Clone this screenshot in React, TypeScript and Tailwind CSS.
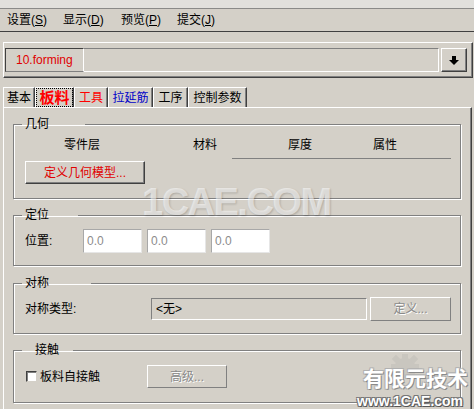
import React from 'react';

const font = "font-['Liberation_Sans','Noto_Sans_CJK_SC',sans-serif]";

const raised =
  'border border-t-white border-l-white border-r-[#404040] border-b-[#404040] shadow-[inset_-1px_-1px_0_#808080]';

type GroupProps = {
  title: string;
  legendClass: string;
  className?: string;
  children: React.ReactNode;
};

const Group: React.FC<GroupProps> = ({ title, legendClass, className = '', children }) => (
  <fieldset
    className={`ml-[9px] w-[448px] border border-[#808080] shadow-[inset_1px_1px_0_#fff,1px_1px_0_#fff] ${className}`}
  >
    <legend className={`ml-[8px] h-[14px] text-[12px] leading-[14px] text-black ${legendClass}`}>{title}</legend>
    {children}
  </fieldset>
);

const DisabledButton: React.FC<{ label: string; className: string }> = ({ label, className }) => (
  <div
    className={`flex items-center justify-center border border-t-white border-l-white border-r-[#808080] border-b-[#808080] text-[12px] text-[#8a8a8a] [text-shadow:1px_1px_0_#fff] ${className}`}
  >
    {label}
  </div>
);

const ValueBox: React.FC<{ value: string }> = ({ value }) => (
  <div className="flex h-[24px] w-[59px] items-center border border-t-[#a8a8a8] border-l-[#a8a8a8] border-r-[#e6e6e6] border-b-[#e6e6e6] bg-white pl-[3px] text-[12px] text-[#8c8c8c]">
    {value}
  </div>
);

const tabs = [
  { label: '基本', w: 'w-[32px]', cls: 'text-black' },
  { label: '板料', w: 'w-[39px]', cls: 'text-[#ff0000] font-bold text-[15px]', active: true },
  { label: '工具', w: 'w-[34px]', cls: 'text-[#ff0000]' },
  { label: '拉延筋', w: 'w-[45px]', cls: 'text-[#0000c8]' },
  { label: '工序', w: 'w-[35px]', cls: 'text-black' },
  { label: '控制参数', w: 'w-[59px]', cls: 'text-black' },
];

export default function App() {
  return (
    <div className={`relative h-[409px] w-[474px] overflow-hidden bg-[#d4d0c8] text-[12px] text-black ${font}`}>
      {/* title strip */}
      <div className="h-[9px] border-b border-[#8a8a88] bg-[#e1e0dc]" />

      {/* menu bar */}
      <div className="flex h-[23px] items-center border-b border-[#404040] pl-[7px] text-[12px]">
        <span className="w-[56px]">设置(<span className="underline">S</span>)</span>
        <span className="w-[58px]">显示(<span className="underline">D</span>)</span>
        <span className="w-[56px]">预览(<span className="underline">P</span>)</span>
        <span className="w-[56px]">提交(<span className="underline">J</span>)</span>
      </div>

      {/* part selector */}
      <div className={`ml-[3px] mt-[10px] flex h-[36px] w-[470px] items-center pl-[1px] ${raised}`}>
        <div className="flex h-[24px] w-[79px] items-center border border-t-[#404040] border-l-[#404040] border-b-[#808080] border-r-white pl-[10px] text-[12px] text-[#e00000]">
          10.forming
        </div>
        <div className="h-[24px] w-[355px] border border-t-[#808080] border-l-0 border-b-white border-r-white" />
        <div className={`ml-[2px] flex h-[24px] w-[26px] items-center justify-center ${raised}`}>
          <svg width="10" height="9" viewBox="0 0 10 9">
            <rect x="3" y="0" width="4" height="4" fill="#000" />
            <polygon points="0,4 10,4 5,9" fill="#000" />
          </svg>
        </div>
      </div>

      {/* tabs */}
      <div className="ml-[3px] mt-[9px] flex h-[20px]">
        {tabs.map((t) => (
          <div
            key={t.label}
            className={`flex items-center justify-center border-l border-t border-white border-r border-r-[#404040] shadow-[inset_-1px_0_0_#808080] ${t.w}`}
          >
            {t.active ? (
              <span className={`border border-dotted border-black px-[2px] leading-[17px] ${t.cls}`}>{t.label}</span>
            ) : (
              <span className={`text-[12px] ${t.cls}`}>{t.label}</span>
            )}
          </div>
        ))}
      </div>

      {/* tab panel */}
      <div className="ml-[3px] h-[302px] w-[469px] border-l border-t border-white border-r border-r-[#404040] pt-[9px] shadow-[inset_-1px_0_0_#808080]">
        <Group title="几何" legendClass="w-[63px] pl-[3px]">
          <div className="pb-[14px] pt-[7px]">
            <div className="flex h-[14px] items-center text-[12px] leading-[14px]">
              <span className="w-[136px] text-center">零件层</span>
              <span className="w-[110px] text-center">材料</span>
              <span className="w-[80px] text-center">厚度</span>
              <span className="w-[90px] text-center">属性</span>
            </div>
            <div className="ml-[218px] mt-[6px] h-px w-[219px] bg-[#808080]" />
            <div
              className={`ml-[11px] mt-[2px] flex h-[23px] w-[120px] items-center justify-center text-[12px] text-[#e00000] ${raised}`}
            >
              定义几何模型...
            </div>
          </div>
        </Group>

        <Group title="定位" legendClass="w-[56px] pl-[3px]" className="mt-[9px]">
          <div className="flex items-center pb-[12px] pl-[11px] pt-[7px]">
            <span className="w-[58px]">位置:</span>
            <div className="flex gap-[5px]">
              <ValueBox value="0.0" />
              <ValueBox value="0.0" />
              <ValueBox value="0.0" />
            </div>
          </div>
        </Group>

        <Group title="对称" legendClass="w-[69px] pl-[3px]" className="mt-[10px]">
          <div className="flex h-[43px] items-start pl-[11px] pt-[7px]">
            <div className="flex h-[24px] items-center">
              <span className="w-[126px]">对称类型:</span>
              <div className="flex h-[22px] w-[216px] items-center border border-t-[#808080] border-l-[#808080] border-b-white border-r-white pl-[4px]">
                &lt;无&gt;
              </div>
              <DisabledButton label="定义..." className="ml-[3px] h-[24px] w-[81px]" />
            </div>
          </div>
        </Group>

        <Group title="接触" legendClass="w-[51px] pl-[13px]" className="mt-[9px]">
          <div className="flex items-center pb-[14px] pl-[12px] pt-[8px]">
            <div className="flex h-[23px] w-[121px] items-center">
              <div className="h-[11px] w-[11px] border border-t-[#404040] border-l-[#404040] border-b-[#d4d0c8] border-r-[#d4d0c8] bg-white shadow-[inset_1px_1px_0_#808080]" />
              <span className="ml-[3px]">板料自接触</span>
            </div>
            <DisabledButton label="高级..." className="h-[23px] w-[80px]" />
          </div>
        </Group>
      </div>

      {/* watermarks */}
      <div className="pointer-events-none absolute left-[142px] top-[181px] text-[38px] font-bold leading-[42px] tracking-[-1.5px] text-white/55 [text-shadow:1px_1px_2px_rgba(0,0,0,0.18)]">
        1CAE.COM
      </div>
      <svg className="pointer-events-none absolute left-[388px] top-[352px]" width="34" height="26" viewBox="0 0 34 26">
        <g fill="#c9c6bf">
          <circle cx="17" cy="17" r="11" />
          <rect x="14" y="2" width="6" height="6" />
          <rect x="3" y="12" width="6" height="6" />
          <rect x="25" y="12" width="6" height="6" />
          <rect x="5" y="4" width="6" height="6" transform="rotate(45 8 7)" />
          <rect x="23" y="4" width="6" height="6" transform="rotate(45 26 7)" />
        </g>
      </svg>
      <div className="pointer-events-none absolute left-[363px] top-[367px] text-[21px] font-bold leading-[24px] text-white [text-shadow:1px_1px_0_#8a8a8a,-1px_-1px_0_#b0b0b0,1px_-1px_0_#b0b0b0,-1px_1px_0_#b0b0b0]">
        有限元技术
      </div>
      <div className="pointer-events-none absolute left-[357px] top-[393px] text-[14px] font-bold leading-[16px] text-white [text-shadow:1px_1px_0_#555,-1px_-1px_0_#777,1px_-1px_0_#777,-1px_1px_0_#777]">
        www.1CAE.com
      </div>
    </div>
  );
}
